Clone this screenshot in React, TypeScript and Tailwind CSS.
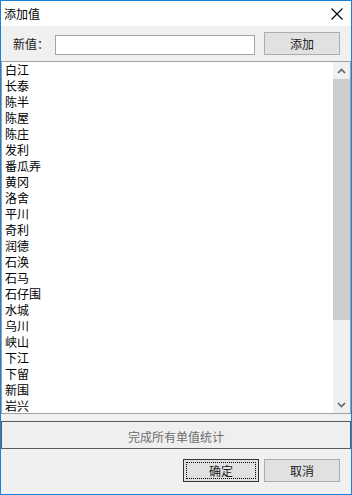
// @ts-nocheck
const ITEMS = [
  '白江', '长泰', '陈半', '陈屋', '陈庄', '发利', '番瓜弄', '黄冈', '洛舍', '平川', '奇利',
  '润德', '石涣', '石马', '石仔围', '水城', '乌川', '峡山', '下江', '下留', '新围', '岩兴',
];

function Chevron({ up }: { up?: boolean }) {
  return (
    <svg width="9" height="6" viewBox="0 0 9 6" className="block">
      <path d={up ? 'M1 5 L4.5 1.5 L8 5' : 'M1 1 L4.5 4.5 L8 1'} fill="none" stroke="#606060" strokeWidth="1.6" />
    </svg>
  );
}

export default function App() {
  return (
    <div
      className="w-[352px] h-[495px] border border-[#1883d7] bg-[#f0f0f0] flex flex-col text-[12px] text-black leading-none"
      style={{ fontFamily: '"Noto Sans CJK SC", "Noto Sans", sans-serif' }}
    >
      {/* title bar */}
      <div className="h-[25px] bg-white flex items-center justify-between pl-[3px] pr-[8px] shrink-0">
        <span className="text-[12px] text-black mt-[1px]">添加值</span>
        <svg width="12" height="12" viewBox="0 0 12 12">
          <path d="M0.5 0.5 L11.5 11.5 M11.5 0.5 L0.5 11.5" stroke="#000" strokeWidth="1.1" />
        </svg>
      </div>

      {/* input row */}
      <div className="h-[35px] flex items-center pl-[12px] pr-[11px] shrink-0">
        <span className="w-[42px] text-[#1a1a1a] mt-[1px]">新值：</span>
        <input className="w-[200px] h-[20px] mt-[2px] bg-white border border-[#a5a5a5] outline-none px-1 text-[12px]" />
        <button className="ml-[9px] w-[76px] h-[23px] bg-[#e1e1e1] border border-[#adadad] text-[12px] text-[#1a1a1a] flex items-center justify-center">
          添加
        </button>
      </div>

      {/* list box */}
      <div className="h-[353px] border border-[#a0a0a0] bg-white flex shrink-0">
        <div className="flex-1 overflow-hidden">
          {ITEMS.map(t => (
            <div key={t} className="h-[16px] pl-[3px] flex items-center text-[12px] text-black">{t}</div>
          ))}
        </div>
        <div className="w-[17px] bg-[#f0f0f0] flex flex-col">
          <div className="h-[17px] flex items-center justify-center"><Chevron up /></div>
          <div className="h-[241px] bg-[#cdcdcd]" />
          <div className="flex-1" />
          <div className="h-[17px] flex items-center justify-center"><Chevron /></div>
        </div>
      </div>

      {/* finish button */}
      <button className="mt-[7px] h-[28px] w-full border border-[#5a5a5a] bg-[#efefef] text-[12px] text-[#6d6d6d] flex items-center justify-center pt-[3px] shrink-0">
        完成所有单值统计
      </button>

      {/* bottom buttons */}
      <div className="mt-[10px] flex justify-end gap-[5px] pr-[11px]">
        <button className="w-[76px] h-[23px] border border-[#333333] bg-[#e1e1e1] p-[2px]">
          <div className="h-full w-full border border-dotted border-black flex items-center justify-center text-[12px] text-[#1a1a1a]">
            确定
          </div>
        </button>
        <button className="w-[76px] h-[23px] border border-[#adadad] bg-[#e1e1e1] flex items-center justify-center text-[12px] text-[#1a1a1a]">
          取消
        </button>
      </div>
    </div>
  );
}
